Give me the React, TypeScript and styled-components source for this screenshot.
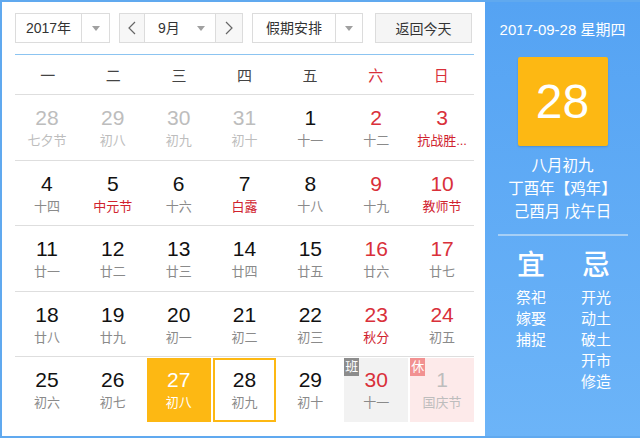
import { FC } from 'react';
import styled, { createGlobalStyle, css } from 'styled-components';

type Tone = 'normal' | 'weekend' | 'out';

interface Day {
  readonly num: number;
  readonly lunar: string;
  readonly tone?: Tone;
  readonly festival?: boolean;
  readonly selected?: boolean;
  readonly today?: boolean;
  readonly badge?: 'work' | 'rest';
}

const weekdays = ['一', '二', '三', '四', '五', '六', '日'];

const weeks: Day[][] = [
  [
    { num: 28, lunar: '七夕节', tone: 'out' },
    { num: 29, lunar: '初八', tone: 'out' },
    { num: 30, lunar: '初九', tone: 'out' },
    { num: 31, lunar: '初十', tone: 'out' },
    { num: 1, lunar: '十一' },
    { num: 2, lunar: '十二', tone: 'weekend' },
    { num: 3, lunar: '抗战胜...', tone: 'weekend', festival: true },
  ],
  [
    { num: 4, lunar: '十四' },
    { num: 5, lunar: '中元节', festival: true },
    { num: 6, lunar: '十六' },
    { num: 7, lunar: '白露', festival: true },
    { num: 8, lunar: '十八' },
    { num: 9, lunar: '十九', tone: 'weekend' },
    { num: 10, lunar: '教师节', tone: 'weekend', festival: true },
  ],
  [
    { num: 11, lunar: '廿一' },
    { num: 12, lunar: '廿二' },
    { num: 13, lunar: '廿三' },
    { num: 14, lunar: '廿四' },
    { num: 15, lunar: '廿五' },
    { num: 16, lunar: '廿六', tone: 'weekend' },
    { num: 17, lunar: '廿七', tone: 'weekend' },
  ],
  [
    { num: 18, lunar: '廿八' },
    { num: 19, lunar: '廿九' },
    { num: 20, lunar: '初一' },
    { num: 21, lunar: '初二' },
    { num: 22, lunar: '初三' },
    { num: 23, lunar: '秋分', tone: 'weekend', festival: true },
    { num: 24, lunar: '初五', tone: 'weekend' },
  ],
  [
    { num: 25, lunar: '初六' },
    { num: 26, lunar: '初七' },
    { num: 27, lunar: '初八', selected: true },
    { num: 28, lunar: '初九', today: true },
    { num: 29, lunar: '初十' },
    { num: 30, lunar: '十一', tone: 'weekend', badge: 'work' },
    { num: 1, lunar: '国庆节', tone: 'out', badge: 'rest' },
  ],
];

const good = ['祭祀', '嫁娶', '捕捉'];
const bad = ['开光', '动土', '破土', '开市', '修造'];

const Arrow: FC = () => (
  <svg width='8' height='5' viewBox='0 0 8 5'>
    <path d='M0 0 L8 0 L4 5 Z' fill='#a0a0a0' />
  </svg>
);

const Chevron: FC<{ dir: 'left' | 'right' }> = ({ dir }) => (
  <svg width='8' height='14' viewBox='0 0 8 14'>
    <path
      d={dir === 'left' ? 'M7 1 L1 7 L7 13' : 'M1 1 L7 7 L1 13'}
      fill='none'
      stroke='#666'
      strokeWidth='1.2'
    />
  </svg>
);

const App: FC = () => {
  return (
    <>
      <GlobalStyle />
      <Frame>
        <Main>
          <Toolbar>
            <SelectBox $width={95}>
              <SelectText $width={66}>2017年</SelectText>
              <ArrowCell>
                <Arrow />
              </ArrowCell>
            </SelectBox>
            <SelectBox $width={124}>
              <NavCell $width={25}>
                <Chevron dir='left' />
              </NavCell>
              <MonthCell>
                <span>9月</span>
                <Arrow />
              </MonthCell>
              <NavCell $width={27} $leftLine>
                <Chevron dir='right' />
              </NavCell>
            </SelectBox>
            <SelectBox $width={111}>
              <SelectText $width={83}>假期安排</SelectText>
              <ArrowCell>
                <Arrow />
              </ArrowCell>
            </SelectBox>
            <TodayButton>返回今天</TodayButton>
          </Toolbar>

          <WeekHeader>
            {weekdays.map((w, i) => (
              <WeekName key={w} $red={i >= 5}>
                {w}
              </WeekName>
            ))}
          </WeekHeader>

          {weeks.map((week, wi) => (
            <WeekRow key={wi}>
              {week.map((d, di) => (
                <Cell
                  key={di}
                  $selected={d.selected}
                  $today={d.today}
                  $badge={d.badge}
                >
                  {d.badge && (
                    <Badge $kind={d.badge}>
                      {d.badge === 'work' ? '班' : '休'}
                    </Badge>
                  )}
                  <DayNum $tone={d.tone ?? 'normal'} $selected={d.selected}>
                    {d.num}
                  </DayNum>
                  <Lunar
                    $out={d.tone === 'out'}
                    $festival={d.festival}
                    $selected={d.selected}
                  >
                    {d.lunar}
                  </Lunar>
                </Cell>
              ))}
            </WeekRow>
          ))}
        </Main>

        <Side>
          <DateLine>2017-09-28 星期四</DateLine>
          <BigDay>28</BigDay>
          <LunarInfo>
            <div>八月初九</div>
            <div>丁酉年【鸡年】</div>
            <div>己酉月 戊午日</div>
          </LunarInfo>
          <Divider />
          <Almanac>
            <AlmanacCol>
              <AlmanacTitle>宜</AlmanacTitle>
              {good.map((g) => (
                <AlmanacItem key={g}>{g}</AlmanacItem>
              ))}
            </AlmanacCol>
            <AlmanacCol>
              <AlmanacTitle>忌</AlmanacTitle>
              {bad.map((b) => (
                <AlmanacItem key={b}>{b}</AlmanacItem>
              ))}
            </AlmanacCol>
          </Almanac>
        </Side>
      </Frame>
    </>
  );
};

export default App;

// Styled Components
const GlobalStyle = createGlobalStyle`
  html, body {
    margin: 0;
    padding: 0;
    background: #ffffff;
  }
  body {
    font-family: "Liberation Sans", "Noto Sans CJK SC", sans-serif;
  }
  * {
    box-sizing: border-box;
  }
`;

const Frame = styled.div`
  width: 640px;
  height: 438px;
  border: 2px solid #60a9ef;
  border-right: none;
  display: flex;
  overflow: hidden;
`;

const Main = styled.div`
  width: 483px;
  background: #ffffff;
  padding: 11px 11px 0 13px;
  display: flex;
  flex-direction: column;
`;

const Toolbar = styled.div`
  display: flex;
  height: 30px;
  gap: 9px;
  margin-bottom: 11px;
`;

const SelectBox = styled.div<{ $width: number }>`
  width: ${(p) => p.$width}px;
  height: 30px;
  border: 1px solid #dcdcdc;
  display: flex;
  align-items: stretch;
  font-size: 14px;
  color: #333;
  background: #fff;
`;

const SelectText = styled.div<{ $width: number }>`
  width: ${(p) => p.$width}px;
  border-right: 1px solid #dcdcdc;
  display: flex;
  align-items: center;
  justify-content: center;
  line-height: 28px;
`;

const ArrowCell = styled.div`
  flex: 1;
  display: flex;
  align-items: center;
  justify-content: center;
`;

const NavCell = styled.div<{ $width: number; $leftLine?: boolean }>`
  width: ${(p) => p.$width}px;
  background: #f7f7f7;
  display: flex;
  align-items: center;
  justify-content: center;
  ${(p) =>
    p.$leftLine
      ? css`
          border-left: 1px solid #dcdcdc;
        `
      : css`
          border-right: 1px solid #dcdcdc;
        `}
`;

const MonthCell = styled.div`
  flex: 1;
  display: flex;
  align-items: center;
  justify-content: space-between;
  padding: 0 10px 0 13px;
  line-height: 28px;
`;

const TodayButton = styled.button`
  margin-left: 3px;
  width: 97px;
  height: 30px;
  border: 1px solid #dcdcdc;
  background: #f5f5f5;
  font-family: "Liberation Sans", "Noto Sans CJK SC", sans-serif;
  font-size: 14px;
  color: #333;
  padding: 0;
  cursor: pointer;
`;

const WeekHeader = styled.div`
  display: grid;
  grid-template-columns: repeat(7, 1fr);
  height: 40px;
  border-top: 1.5px solid #8cc4f1;
`;

const WeekName = styled.div<{ $red?: boolean }>`
  display: flex;
  align-items: center;
  justify-content: center;
  font-size: 15px;
  color: ${(p) => (p.$red ? '#d9303a' : '#444')};
`;

const WeekRow = styled.div`
  display: grid;
  grid-template-columns: repeat(7, 1fr);
  column-gap: 2px;
  height: 65.5px;
  border-top: 1.5px solid #dedede;
  padding-top: 1px;
`;

const Cell = styled.div<{
  $selected?: boolean;
  $today?: boolean;
  $badge?: 'work' | 'rest';
}>`
  position: relative;
  height: 64px;
  display: flex;
  flex-direction: column;
  align-items: center;
  justify-content: center;
  gap: 2px;
  padding: 0 4px;
  background: ${(p) =>
    p.$selected
      ? '#fdb813'
      : p.$badge === 'work'
        ? '#f2f2f2'
        : p.$badge === 'rest'
          ? '#fdeaea'
          : 'transparent'};
  border: ${(p) => (p.$today ? '2px solid #fdb813' : 'none')};
`;

const Badge = styled.span<{ $kind: 'work' | 'rest' }>`
  position: absolute;
  top: 0;
  left: 0;
  width: 15px;
  height: 18px;
  font-size: 13px;
  line-height: 18px;
  text-align: center;
  color: #fff;
  background: ${(p) => (p.$kind === 'work' ? '#8c8c8c' : '#f29191')};
`;

const DayNum = styled.div<{ $tone: Tone; $selected?: boolean }>`
  font-size: 21px;
  line-height: 24px;
  color: ${(p) =>
    p.$selected
      ? '#ffffff'
      : p.$tone === 'out'
        ? '#bdbdbd'
        : p.$tone === 'weekend'
          ? '#d9303a'
          : '#111'};
`;

const Lunar = styled.div<{
  $out?: boolean;
  $festival?: boolean;
  $selected?: boolean;
}>`
  font-size: 13px;
  line-height: 18px;
  white-space: nowrap;
  color: ${(p) =>
    p.$selected
      ? '#ffffff'
      : p.$out
        ? '#bdbdbd'
        : p.$festival
          ? '#d0222e'
          : '#8a8a8a'};
`;

const Side = styled.div`
  flex: 1;
  background: linear-gradient(#55a3f3, #6cb4f8);
  display: flex;
  flex-direction: column;
  align-items: center;
  color: #fff;
  padding-top: 19px;
`;

const DateLine = styled.div`
  font-size: 15px;
  line-height: 18px;
`;

const BigDay = styled.div`
  margin-top: 18px;
  width: 90px;
  height: 89px;
  background: #fdb813;
  border-radius: 2px;
  box-shadow: 0 1px 2px rgba(0, 0, 0, 0.15);
  display: flex;
  align-items: center;
  justify-content: center;
  font-size: 48px;
  line-height: 1;
`;

const LunarInfo = styled.div`
  margin-top: 8px;
  font-size: 15.5px;
  line-height: 23px;
  text-align: center;
`;

const Divider = styled.div`
  margin-top: 11px;
  width: 130px;
  height: 2px;
  background: #a6cff6;
`;

const Almanac = styled.div`
  display: flex;
  gap: 35px;
  margin-top: 13px;
  margin-left: 2px;
`;

const AlmanacCol = styled.div`
  display: flex;
  flex-direction: column;
  align-items: center;
`;

const AlmanacTitle = styled.div`
  font-size: 28px;
  line-height: 34px;
  font-weight: 500;
  margin-bottom: 4px;
`;

const AlmanacItem = styled.div`
  font-size: 15px;
  line-height: 21px;
`;
